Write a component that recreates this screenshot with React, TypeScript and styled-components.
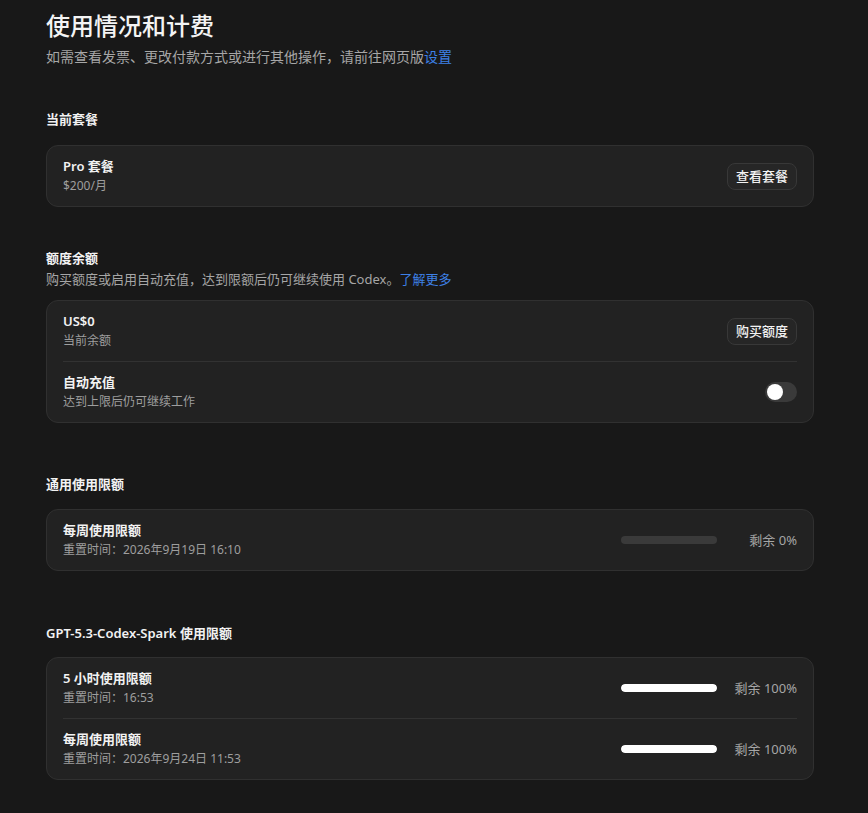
import React from 'react';
import styled, { createGlobalStyle } from 'styled-components';

const GlobalStyle = createGlobalStyle`
  html, body {
    margin: 0;
    padding: 0;
    background: #181818;
  }
  body {
    font-family: "Noto Sans", "Noto Sans CJK SC", sans-serif;
    color: #f2f2f2;
    -webkit-font-smoothing: antialiased;
  }
`;

const Page = styled.div`
  min-height: 813px;
  box-sizing: border-box;
  padding: 10px 54px 20px 46px;
`;

const Title = styled.h1`
  margin: 0;
  font-size: 24px;
  line-height: 32px;
  font-weight: 500;
  color: #f4f4f4;
`;

const Subtitle = styled.p`
  margin: 5px 0 0;
  font-size: 14px;
  line-height: 20px;
  color: #a6a6a6;
`;

const Link = styled.a`
  color: #3d80e6;
  text-decoration: none;
  cursor: pointer;
`;

const Section = styled.section<{ $top: number }>`
  margin-top: ${p => p.$top}px;
`;

const SectionTitle = styled.h2`
  margin: 0;
  font-size: 13px;
  line-height: 20px;
  font-weight: 600;
  color: #f2f2f2;
`;

const SectionDesc = styled.p`
  margin: 1px 0 0;
  font-size: 13px;
  line-height: 20px;
  color: #a6a6a6;
`;

const Card = styled.div<{ $top: number }>`
  margin-top: ${p => p.$top}px;
  background: #222222;
  border: 1px solid #303030;
  border-radius: 12px;
  padding: 0 16px;
`;

const Row = styled.div`
  display: flex;
  align-items: center;
  justify-content: space-between;
  min-height: 60px;
  box-sizing: border-box;
  padding: 10px 0;
`;

const Divider = styled.div`
  height: 1px;
  background: #323232;
`;

const RowText = styled.div`
  display: flex;
  flex-direction: column;
`;

const RowTitle = styled.div`
  font-size: 13px;
  line-height: 20px;
  font-weight: 600;
  color: #f2f2f2;
`;

const RowSub = styled.div`
  font-size: 12px;
  line-height: 20px;
  color: #9e9e9e;
`;

const Button = styled.button`
  font-family: inherit;
  font-size: 13px;
  font-weight: 500;
  line-height: 19px;
  color: #f2f2f2;
  background: #262626;
  border: 1px solid #383838;
  border-radius: 8px;
  padding: 3px 8px;
  cursor: pointer;
`;

const Toggle = styled.div<{ $on: boolean }>`
  width: 32px;
  height: 20px;
  border-radius: 10px;
  background: ${p => (p.$on ? '#3d80e6' : '#3a3a3a')};
  display: flex;
  align-items: center;
  padding: 0 2px;
  box-sizing: border-box;
  justify-content: ${p => (p.$on ? 'flex-end' : 'flex-start')};
`;

const Knob = styled.div`
  width: 16px;
  height: 16px;
  border-radius: 50%;
  background: #ffffff;
`;

const Meter = styled.div`
  display: flex;
  align-items: center;
  gap: 16px;
`;

const Track = styled.div`
  width: 96px;
  height: 8px;
  border-radius: 4px;
  background: #3a3a3a;
  overflow: hidden;
`;

const Fill = styled.div`
  height: 100%;
  background: #ffffff;
  border-radius: 4px;
`;

const MeterLabel = styled.div`
  width: 64px;
  text-align: right;
  font-size: 13px;
  line-height: 19px;
  color: #a6a6a6;
`;

type Limit = { title: string; reset: string; remaining: number };

const LimitRow = ({ title, reset, remaining }: Limit) => (
  <Row>
    <RowText>
      <RowTitle>{title}</RowTitle>
      <RowSub>{reset}</RowSub>
    </RowText>
    <Meter>
      <Track>
        <Fill style={{ width: `${remaining}%` }} />
      </Track>
      <MeterLabel>剩余 {remaining}%</MeterLabel>
    </Meter>
  </Row>
);

const sparkLimits: Limit[] = [
  { title: '5 小时使用限额', reset: '重置时间：16:53', remaining: 100 },
  { title: '每周使用限额', reset: '重置时间：2026年9月24日 11:53', remaining: 100 },
];

export default function App() {
  return (
    <Page>
      <GlobalStyle />
      <Title>使用情况和计费</Title>
      <Subtitle>
        如需查看发票、更改付款方式或进行其他操作，请前往网页版<Link>设置</Link>
      </Subtitle>

      <Section $top={42}>
        <SectionTitle>当前套餐</SectionTitle>
        <Card $top={16}>
          <Row>
            <RowText>
              <RowTitle>Pro 套餐</RowTitle>
              <RowSub>$200/月</RowSub>
            </RowText>
            <Button>查看套餐</Button>
          </Row>
        </Card>
      </Section>

      <Section $top={41}>
        <SectionTitle>额度余额</SectionTitle>
        <SectionDesc>
          购买额度或启用自动充值，达到限额后仍可继续使用 Codex。<Link>了解更多</Link>
        </SectionDesc>
        <Card $top={11}>
          <Row>
            <RowText>
              <RowTitle>US$0</RowTitle>
              <RowSub>当前余额</RowSub>
            </RowText>
            <Button>购买额度</Button>
          </Row>
          <Divider />
          <Row>
            <RowText>
              <RowTitle>自动充值</RowTitle>
              <RowSub>达到上限后仍可继续工作</RowSub>
            </RowText>
            <Toggle $on={false}>
              <Knob />
            </Toggle>
          </Row>
        </Card>
      </Section>

      <Section $top={51}>
        <SectionTitle>通用使用限额</SectionTitle>
        <Card $top={15}>
          <LimitRow title="每周使用限额" reset="重置时间：2026年9月19日 16:10" remaining={0} />
        </Card>
      </Section>

      <Section $top={52}>
        <SectionTitle>GPT-5.3-Codex-Spark 使用限额</SectionTitle>
        <Card $top={14}>
          {sparkLimits.map((l, i) => (
            <React.Fragment key={l.title}>
              {i > 0 && <Divider />}
              <LimitRow {...l} />
            </React.Fragment>
          ))}
        </Card>
      </Section>
    </Page>
  );
}
